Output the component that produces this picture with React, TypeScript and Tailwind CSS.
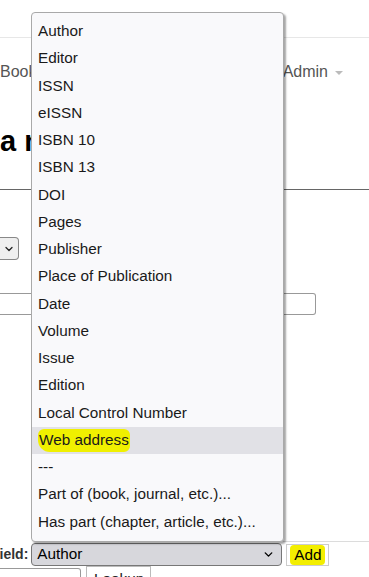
import { ChevronDown } from 'lucide-react'

const fields = [
  'Author',
  'Editor',
  'ISSN',
  'eISSN',
  'ISBN 10',
  'ISBN 13',
  'DOI',
  'Pages',
  'Publisher',
  'Place of Publication',
  'Date',
  'Volume',
  'Issue',
  'Edition',
  'Local Control Number',
  'Web address',
  '---',
  'Part of (book, journal, etc.)...',
  'Has part (chapter, article, etc.)...',
]

export default function App() {
  return (
    <div className="relative h-[577px] w-[369px] overflow-hidden bg-white font-['Liberation_Sans',Arial,sans-serif] text-[#222]">
      {/* page behind the open select */}
      <div className="h-[37px]" />
      <div className="border-t border-[#e7e7e7]" />
      <div className="flex h-[66px] items-center justify-between pt-[2px] text-[16px] text-[#555]">
        <span>Book</span>
        <span className="mr-[26px] flex items-center gap-[7px]">
          Admin
          <span className="mt-[1px] h-0 w-0 border-x-[4px] border-t-[4px] border-x-transparent border-t-[#bbb]" />
        </span>
      </div>
      <h1 className="mt-[20px] text-[29px] leading-[34px] font-bold text-black">a new record</h1>
      <div className="mt-[31px] border-t border-[#666]" />

      <div className="mt-[47px] flex h-[23px] w-[19px] items-center justify-end rounded-r-[4px] border border-l-0 border-[#888] bg-[#efefef] pr-[3px]">
        <ChevronDown className="h-[12px] w-[12px]" strokeWidth={2.6} />
      </div>

      <div className="mt-[33px] h-[22px] w-[316px] rounded-r-[3px] border border-l-0 border-[#999]" />

      <div className="mt-[226px] ml-[283px] border-t border-[#dcdcdc]" />

      <div className="mt-[1px] flex items-center">
        <span className="-ml-[9px] text-[14px] font-bold text-[#333]">Field:</span>
        <div className="ml-[3px] flex h-[23px] w-[251px] items-center justify-between rounded-[4px] border border-[#777] bg-[#d7d7dc] pr-[6px] pl-[5px] text-[15.3px] text-black">
          <span>Author</span>
          <ChevronDown className="h-[13px] w-[13px]" strokeWidth={2.6} />
        </div>
        <div className="ml-[4px] flex h-[22px] w-[43px] items-center justify-center border border-[#ccc] bg-white">
          <span className="rounded-[4px] bg-[#f3ee00] px-[4px] py-[1px] text-[15.3px] leading-[18px] text-black">Add</span>
        </div>
      </div>

      <div className="flex items-start">
        <div className="mt-[2px] h-[20px] w-[81px] rounded-r-[3px] border border-l-0 border-[#999]" />
        <div className="ml-[5px] h-[22px] w-[65px] border border-[#bbb] bg-white px-[7px] pt-[3px] text-[15.3px] leading-[18px] text-[#222]">
          Lookup
        </div>
      </div>

      {/* open dropdown list */}
      <ul className="absolute top-[12px] left-[31px] w-[253px] rounded-[4px] border border-[#a9a9a9] bg-[#f9f9fb] py-[5px] shadow-[2px_2px_2px_rgba(0,0,0,0.35)]">
        {fields.map((f) => (
          <li
            key={f}
            className={
              'flex h-[27.25px] items-center pl-[6px] text-[15.3px] text-[#1a1a1a] ' +
              (f === 'Web address' ? 'bg-[#e1e1e6]' : '')
            }
          >
            {f === 'Web address' ? (
              <span className="rounded-[6px] rounded-bl-[12px] bg-[#f0f000] px-[1px]">{f}</span>
            ) : (
              f
            )}
          </li>
        ))}
      </ul>
    </div>
  )
}
